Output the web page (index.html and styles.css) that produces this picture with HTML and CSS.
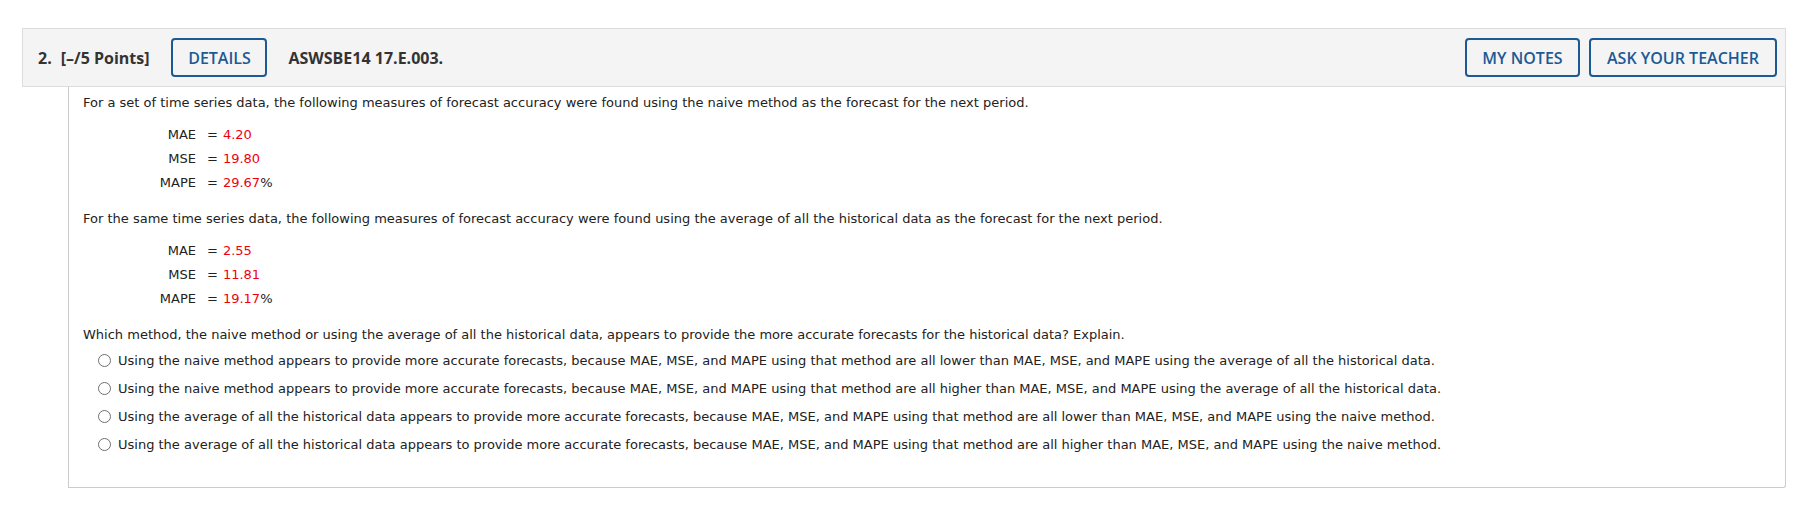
FILE: index.html
```html
<!DOCTYPE html>
<html lang="en">
<head>
  <meta charset="UTF-8">
  <title>Question 2</title>
  <link rel="stylesheet" href="styles.css">
</head>
<body>
  <div class="question">
    <div class="q-header">
      <span class="q-num">2.</span>
      <span class="q-points">[&ndash;/5 Points]</span>
      <button class="btn btn-details">DETAILS</button>
      <span class="q-code">ASWSBE14 17.E.003.</span>
      <div class="q-actions">
        <button class="btn btn-notes">MY NOTES</button>
        <button class="btn btn-ask">ASK YOUR TEACHER</button>
      </div>
    </div>

    <div class="q-body">
      <p>For a set of time series data, the following measures of forecast accuracy were found using the naive method as the forecast for the next period.</p>
      <div class="eq">
        <span class="eq-label">MAE</span><span class="eq-sign">=</span><span><span class="val">4.20</span></span>
        <span class="eq-label">MSE</span><span class="eq-sign">=</span><span><span class="val">19.80</span></span>
        <span class="eq-label">MAPE</span><span class="eq-sign">=</span><span><span class="val">29.67</span>%</span>
      </div>

      <p>For the same time series data, the following measures of forecast accuracy were found using the average of all the historical data as the forecast for the next period.</p>
      <div class="eq">
        <span class="eq-label">MAE</span><span class="eq-sign">=</span><span><span class="val">2.55</span></span>
        <span class="eq-label">MSE</span><span class="eq-sign">=</span><span><span class="val">11.81</span></span>
        <span class="eq-label">MAPE</span><span class="eq-sign">=</span><span><span class="val">19.17</span>%</span>
      </div>

      <p>Which method, the naive method or using the average of all the historical data, appears to provide the more accurate forecasts for the historical data? Explain.</p>
      <div class="choices">
        <label class="choice"><input type="radio" name="q2"> Using the naive method appears to provide more accurate forecasts, because MAE, MSE, and MAPE using that method are all lower than MAE, MSE, and MAPE using the average of all the historical data.</label>
        <label class="choice"><input type="radio" name="q2"> Using the naive method appears to provide more accurate forecasts, because MAE, MSE, and MAPE using that method are all higher than MAE, MSE, and MAPE using the average of all the historical data.</label>
        <label class="choice"><input type="radio" name="q2"> Using the average of all the historical data appears to provide more accurate forecasts, because MAE, MSE, and MAPE using that method are all lower than MAE, MSE, and MAPE using the naive method.</label>
        <label class="choice"><input type="radio" name="q2"> Using the average of all the historical data appears to provide more accurate forecasts, because MAE, MSE, and MAPE using that method are all higher than MAE, MSE, and MAPE using the naive method.</label>
      </div>
    </div>
  </div>
</body>
</html>
```

FILE: styles.css
```css
body {
  margin: 0;
  background-color: white;
  font-family: "DejaVu Sans", Verdana, sans-serif;
  font-size: 13px;
  color: #222;
}

.question {
  margin: 28px 7px 0 22px;
}

.q-header {
  display: flex;
  align-items: center;
  height: 57px;
  padding: 0 8px 0 15px;
  background-color: #f4f4f4;
  border: 1px solid #dcdcdc;
  font-family: "Open Sans", Arial, sans-serif;
  font-size: 16px;
  font-weight: 700;
  color: #333;
}

.q-num {
  margin-right: 9px;
}

.q-points {
  margin-right: 22px;
}

.q-code {
  margin-left: 21px;
}

.q-actions {
  margin-left: auto;
  display: flex;
  gap: 9px;
}

.btn {
  height: 39px;
  padding: 0;
  background-color: transparent;
  border: 2px solid #1d5a94;
  border-radius: 4px;
  font-family: "Open Sans", Arial, sans-serif;
  font-size: 16px;
  font-weight: 600;
  color: #1d5a94;
  cursor: pointer;
}

.btn-details {
  width: 96px;
}

.btn-notes {
  width: 115px;
}

.btn-ask {
  width: 188px;
}

.q-body {
  margin-left: 46px;
  padding: 6px 14px 29px;
  border: 1px solid #cccccc;
  border-top: none;
  border-radius: 0 0 3px 0;
}

.q-body p {
  margin: 0;
  line-height: 20px;
}

.eq {
  display: grid;
  grid-template-columns: 113px auto 1fr;
  line-height: 24px;
  margin: 10px 0 14px;
}

.eq-label {
  text-align: right;
}

.eq-sign {
  margin: 0 5px 0 11px;
}

.val {
  color: #f0000f;
}

.choices {
  margin: 1px 0 0 15px;
}

.choice {
  display: flex;
  align-items: center;
  height: 28px;
}

.choice input {
  appearance: none;
  flex: none;
  width: 13px;
  height: 13px;
  margin: 0 7px 0 0;
  border: 1px solid #6f6f6f;
  border-radius: 50%;
  background-color: white;
}
```
